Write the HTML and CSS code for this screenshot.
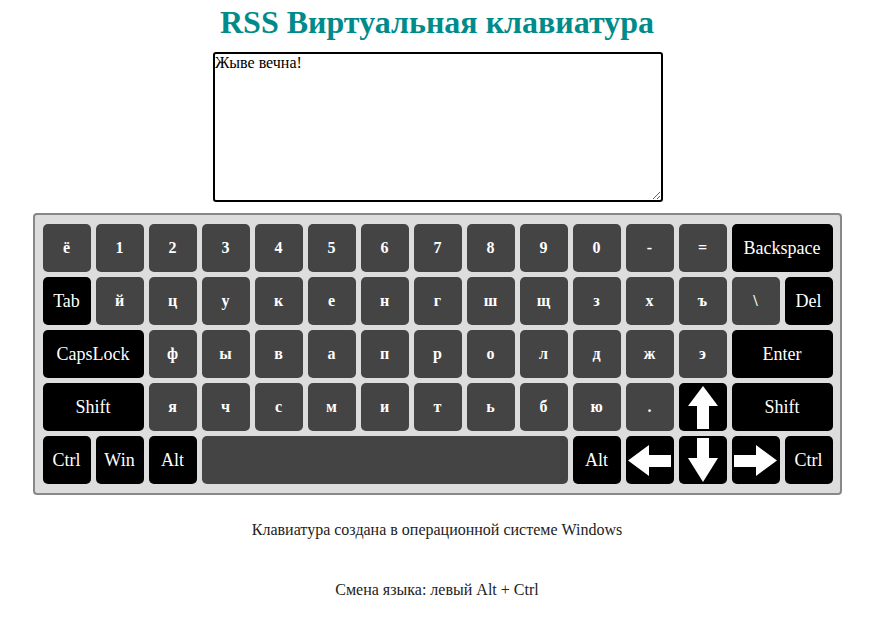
FILE: index.html
```html
<!DOCTYPE html>
<html lang="ru">
<head>
<meta charset="utf-8">
<title>RSS Виртуальная клавиатура</title>
<link rel="stylesheet" href="styles.css">
</head>
<body>
<h1 class="title">RSS Виртуальная клавиатура</h1>
<textarea class="display" spellcheck="true">Жыве вечна!</textarea>
<div class="keyboard">
  <div class="key">ё</div><div class="key">1</div><div class="key">2</div><div class="key">3</div><div class="key">4</div><div class="key">5</div><div class="key">6</div><div class="key">7</div><div class="key">8</div><div class="key">9</div><div class="key">0</div><div class="key">-</div><div class="key">=</div><div class="key special wide">Backspace</div>
  <div class="key special">Tab</div><div class="key">й</div><div class="key">ц</div><div class="key">у</div><div class="key">к</div><div class="key">е</div><div class="key">н</div><div class="key">г</div><div class="key">ш</div><div class="key">щ</div><div class="key">з</div><div class="key">х</div><div class="key">ъ</div><div class="key">\</div><div class="key special">Del</div>
  <div class="key special wide">CapsLock</div><div class="key">ф</div><div class="key">ы</div><div class="key">в</div><div class="key">а</div><div class="key">п</div><div class="key">р</div><div class="key">о</div><div class="key">л</div><div class="key">д</div><div class="key">ж</div><div class="key">э</div><div class="key special wide">Enter</div>
  <div class="key special wide">Shift</div><div class="key">я</div><div class="key">ч</div><div class="key">с</div><div class="key">м</div><div class="key">и</div><div class="key">т</div><div class="key">ь</div><div class="key">б</div><div class="key">ю</div><div class="key">.</div>
  <div class="key special"><svg class="arrow-v" viewBox="0 0 30 43"><polygon points="15,0 30,20 21,20 21,43 9,43 9,20 0,20" fill="#fff"/></svg></div>
  <div class="key special wide">Shift</div>
  <div class="key special">Ctrl</div><div class="key special">Win</div><div class="key special">Alt</div><div class="key space"></div><div class="key special">Alt</div>
  <div class="key special"><svg class="arrow-h" viewBox="0 0 43 31"><polygon points="0,15.5 21,0 21,10 43,10 43,22 21,22 21,31" fill="#fff"/></svg></div>
  <div class="key special"><svg class="arrow-v down" viewBox="0 0 30 44"><polygon points="9,0 21,0 21,20 30,20 15,44 0,20 9,20" fill="#fff"/></svg></div>
  <div class="key special"><svg class="arrow-h" viewBox="0 0 43 31"><polygon points="43,15.5 22,0 22,10 0,10 0,22 22,22 22,31" fill="#fff"/></svg></div>
  <div class="key special">Ctrl</div>
</div>
<p class="note first">Клавиатура создана в операционной системе Windows</p>
<p class="note second">Смена языка: левый Alt + Ctrl</p>
</body>
</html>
```
FILE: styles.css
```css
html, body {
  margin: 0;
  padding: 0;
  background: #fff;
}
body {
  font-family: "Liberation Serif", "Times New Roman", serif;
  color: #222;
}
.title {
  margin: 4px 0 0;
  font-size: 32px;
  font-weight: bold;
  line-height: normal;
  text-align: center;
  color: #008b8b;
}
.display {
  display: block;
  box-sizing: border-box;
  width: 450px;
  height: 150px;
  margin: 11px 0 0 calc(50% - 224px);
  padding: 0;
  border: 2px solid #000;
  border-radius: 3px;
  font-family: "Liberation Serif", "Times New Roman", serif;
  font-size: 16px;
  line-height: 1.1;
  color: #000;
  background: #fff;
  outline: none;
}
.keyboard {
  display: grid;
  grid-template-columns: repeat(15, 48px);
  grid-auto-rows: 48px;
  gap: 5px;
  width: max-content;
  margin: 11px auto 0;
  padding: 9px 7px 9px 8px;
  border: 2px solid #888;
  border-radius: 4px;
  background: #ddd;
}
.key {
  display: flex;
  align-items: center;
  justify-content: center;
  border-radius: 5px;
  background: #444;
  color: #fff;
  font-size: 16px;
  font-weight: bold;
}
.key.special {
  background: #000;
  font-size: 18px;
  font-weight: normal;
}
.key.wide {
  grid-column: span 2;
}
.key.space {
  grid-column: span 7;
}
.arrow-v {
  width: 30px;
  height: 43px;
}
.arrow-v.down {
  height: 44px;
}
.arrow-h {
  width: 43px;
  height: 31px;
}
.note {
  margin: 0;
  font-size: 16px;
  line-height: normal;
  text-align: center;
}
.note.first {
  margin-top: 26px;
}
.note.second {
  margin-top: 42px;
}
```
